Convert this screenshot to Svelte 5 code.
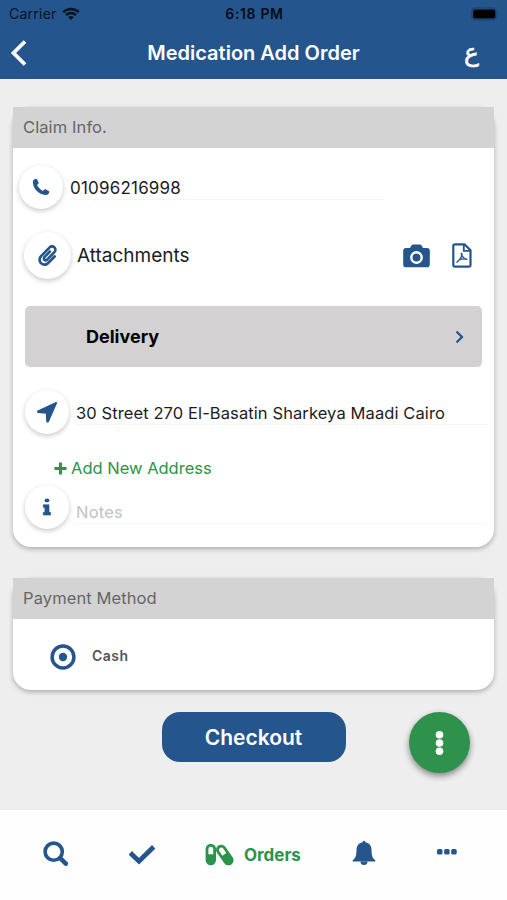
<script>
	let phone = '01096216998';
	let address = '30 Street 270 El-Basatin Sharkeya Maadi Cairo';
	let notes = '';
	let payment = 'cash';
</script>

<div class="screen">
	<header>
		<div class="status">
			<span class="carrier">Carrier</span>
			<svg class="wifi" width="18" height="13" viewBox="0 0 18 13">
				<path d="M1.2 5.1a11.2 11.2 0 0 1 15.6 0M4 8.1a7.2 7.2 0 0 1 10 0" fill="none" stroke="#051425" stroke-width="2.5" />
				<path d="M6.2 10.2a4.1 4.1 0 0 1 5.6 0L9 13z" fill="#051425" />
			</svg>
			<span class="time">6:18 PM</span>
			<svg class="battery" width="28" height="14" viewBox="0 0 28 14">
				<rect x="1" y="1" width="24" height="12" rx="3.5" fill="none" stroke="#1b416d" stroke-width="1.2" />
				<rect x="2.2" y="2.4" width="22" height="9.2" rx="2" fill="#000" />
				<path d="M26.3 5q1.5 2 0 4z" fill="#1b416d" />
			</svg>
		</div>
		<div class="nav">
			<button class="back" aria-label="Back">
				<svg width="17" height="28" viewBox="0 0 17 28">
					<path d="M15 2.500 3.500 14 15 25.500" fill="none" stroke="#fff" stroke-width="3.800" />
				</svg>
			</button>
			<h1>Medication Add Order</h1>
			<button class="lang">ع</button>
		</div>
	</header>

	<main>
		<section class="card claim">
			<h2>Claim Info.</h2>

			<div class="row phone">
				<span class="circle">
					<svg width="18" height="18" viewBox="0 0 18 18">
						<path d="M.9 4.600C.7 2.600 2 1 3.900.7c.4-.1.8.1 1 .5l1.700 3.400c.2.400.1.800-.2 1.100L5 7.100c1.200 2.500 3.200 4.500 5.900 5.800l1.400-1.400c.3-.3.7-.4 1.100-.2l3.400 1.700c.4.200.6.600.5 1-.3 1.900-1.800 3.200-3.800 3C6.800 16.600 1.400 11.200.9 4.600z" fill="#24558c" />
					</svg>
				</span>
				<div class="field">{phone}</div>
			</div>

			<div class="row attach">
				<span class="circle">
					<svg width="19" height="21" viewBox="0 0 448 512">
						<path d="M43.246 466.142c-58.43-60.289-57.341-157.511 1.386-217.581L254.392 34c44.316-45.332 116.351-45.336 160.671 0 43.89 44.894 43.943 117.329 0 162.276L232.214 383.128c-29.855 30.537-78.633 30.111-107.982-.998-28.275-29.97-27.368-77.473 1.452-106.953l143.743-146.835c6.182-6.314 16.312-6.422 22.626-.241l22.861 22.379c6.315 6.182 6.422 16.312.241 22.626L171.427 319.927c-4.932 5.045-5.236 13.428-.648 18.292 4.372 4.634 11.245 4.711 15.688.165l182.849-186.851c19.613-20.062 19.613-52.725-.011-72.798-19.189-19.627-49.957-19.637-69.154 0L90.39 293.295c-34.763 35.56-35.299 93.12-1.191 128.313 34.01 35.093 88.985 35.137 123.058.286l172.06-175.999c6.177-6.319 16.307-6.433 22.626-.256l22.877 22.364c6.319 6.177 6.434 16.307.256 22.626l-172.06 175.998c-59.576 60.938-155.943 60.216-214.77-.485z" fill="#24558c" />
					</svg>
				</span>
				<span class="label">Attachments</span>
				<svg class="camera" width="27" height="24" viewBox="0 0 27 24">
					<path d="M3 4h4l1.4-2.6Q9 .5 10.200 .5h6.600q1.200 0 1.800.9L20 4h4q2.800 0 2.800 2.800v13.600q0 2.800-2.800 2.800H3q-2.800 0-2.800-2.800V6.800Q.2 4 3 4z" fill="#24558c" />
					<circle cx="13.500" cy="13.500" r="5.200" fill="none" stroke="#fff" stroke-width="2.400" />
				</svg>
				<svg class="pdf" width="20" height="25" viewBox="0 0 20 25">
					<path d="M3 1.300h9.500l6 6V22q0 1.700-1.700 1.700H3q-1.700 0-1.700-1.700V3Q1.300 1.300 3 1.300z" fill="none" stroke="#24558c" stroke-width="2.200" />
					<path d="M11.800 1.500v6.300h6.500" fill="none" stroke="#24558c" stroke-width="1.800" />
					<path d="M9.200 9.800q.8 5.600 6 6.700M9.500 9.800q1.300 5-5 9.700M6.500 17.200q4-2 8.800-1" fill="none" stroke="#24558c" stroke-width="1.400" />
				</svg>
			</div>

			<button class="delivery">
				Delivery
				<svg width="9" height="14" viewBox="0 0 9 14">
					<path d="M1.500 1.500 7 7l-5.500 5.500" fill="none" stroke="#24558c" stroke-width="2.200" />
				</svg>
			</button>

			<div class="row address">
				<span class="circle">
					<svg width="22" height="22" viewBox="0 0 22 22">
						<path d="M20.200 1.800 2 10.200v.8l8.700.9.400 8.600h1z" fill="#24558c" stroke="#24558c" stroke-width="1.800" stroke-linejoin="round" />
					</svg>
				</span>
				<div class="field">{address}</div>
			</div>

			<button class="add">
				<svg width="13" height="13" viewBox="0 0 13 13">
					<path d="M6.500 .5v12M.5 6.500h12" stroke="#2a944a" stroke-width="3" />
				</svg>
				Add New Address
			</button>

			<div class="row notes">
				<span class="circle">
					<svg width="10" height="18" viewBox="0 0 10 18">
						<ellipse cx="5" cy="2.400" rx="2.400" ry="1.900" fill="#24558c" />
						<path d="M1.300 6.700h5.700v7.600h1.600V17H1.300v-2.700h1.600V9.400H1.300z" fill="#24558c" stroke="#24558c" stroke-width=".6" stroke-linejoin="round" />
					</svg>
				</span>
				<div class="field">{notes || 'Notes'}</div>
			</div>
		</section>

		<section class="card pay">
			<h2>Payment Method</h2>
			<label>
				<svg width="26" height="26" viewBox="0 0 26 26">
					<circle cx="13" cy="13" r="10.900" fill="none" stroke="#24558c" stroke-width="3.500" />
					{#if payment === 'cash'}
						<circle cx="13" cy="13" r="4.200" fill="#24558c" />
					{/if}
				</svg>
				<span>Cash</span>
			</label>
		</section>

		<button class="checkout">Checkout</button>
		<button class="fab" aria-label="More">
			<svg width="10" height="26" viewBox="0 0 10 26">
				<circle cx="4.500" cy="4.700" r="3.800" fill="#fff" />
				<circle cx="4.500" cy="13" r="3.800" fill="#fff" />
				<circle cx="4.500" cy="21.300" r="3.800" fill="#fff" />
			</svg>
		</button>
	</main>

	<footer>
		<svg class="search" width="26" height="26" viewBox="0 0 26 26">
			<circle cx="10.700" cy="10.700" r="8.600" fill="none" stroke="#24558c" stroke-width="3.600" />
			<path d="m17.200 17.200 5.600 5.400" stroke="#24558c" stroke-width="4.600" stroke-linecap="round" />
		</svg>
		<svg class="check" width="26" height="20" viewBox="0 0 26 20">
			<path d="m3 9.500 7 6.700L23 3.500" fill="none" stroke="#24558c" stroke-width="4.800" stroke-linecap="square" />
		</svg>
		<div class="orders">
			<svg width="29" height="23" viewBox="0 0 29 23">
				<rect x=".6" y=".8" width="10.400" height="21.400" rx="5.200" fill="#2a944a" />
				<path d="M3.400 11.300V6.200a2.400 2.400 0 0 1 4.800 0v5.100z" fill="#fff" />
				<g transform="rotate(-35 19.800 12)">
					<rect x="14.700" y=".5" width="10.200" height="23" rx="5.100" fill="#2a944a" />
					<path d="M17.400 11.300V6a2.400 2.400 0 0 1 4.800 0v5.300z" fill="#fff" />
				</g>
			</svg>
			<span>Orders</span>
		</div>
		<svg class="bell" width="24" height="26" viewBox="0 0 24 26">
			<path d="M10.500 2.200a1.500 1.500 0 0 1 3 0c4 .8 6 4 6 7.700 0 6 1.300 8.300 3.600 10.100.7.700.4 1.500-.5 1.500H1.400c-.9 0-1.200-.8-.5-1.500C3.200 18.200 4.500 15.900 4.500 9.900c0-3.700 2-6.900 6-7.700z" fill="#24558c" />
			<path d="M8.500 21.500h7a3.500 3.500 0 0 1-7 0z" fill="#24558c" />
		</svg>
		<svg class="dots" width="20" height="6" viewBox="0 0 20 6">
			<rect x="0" y="0" width="5.500" height="5.600" rx="1.500" fill="#24558c" />
			<rect x="7.100" y="0" width="5.500" height="5.600" rx="1.500" fill="#24558c" />
			<rect x="14.200" y="0" width="5.500" height="5.600" rx="1.500" fill="#24558c" />
		</svg>
	</footer>
</div>

<style>
	:global(body) {
		margin: 0;
		background: #eee;
	}

	.screen {
		width: 507px;
		height: 900px;
		display: flex;
		flex-direction: column;
		overflow: hidden;
		background: #eee;
		font-family: Inter, "Noto Sans", sans-serif;
		color: #1c1c1c;
		white-space: nowrap;
	}

	svg {
		display: block;
		flex: none;
	}

	button {
		border: 0;
		padding: 0;
		background: none;
		font-family: inherit;
	}

	header {
		height: 79px;
		flex: none;
		background: #24558c;
	}

	.status {
		height: 27px;
		display: grid;
		grid-template-columns: 53px 18px 1fr 28px;
		align-items: center;
		padding: 0 8px 0 9px;
		color: #051425;
		font-size: 14px;
		letter-spacing: 0.25px;
	}

	.time {
		padding-right: 44px;
		text-align: center;
		font-weight: 600;
		letter-spacing: 0.65px;
		color: #030d18;
		transform: translateX(1px);
	}

	.nav {
		height: 51px;
		display: grid;
		grid-template-columns: 17px 1fr 17px;
		align-items: center;
		padding: 0 27px 0 10px;
	}

	h1 {
		margin: 0 0 0 17px;
		text-align: center;
		font-size: 20px;
		font-weight: 600;
		color: #fff;
	}

	.lang {
		color: #fff;
		font: 25px "DejaVu Sans", sans-serif;
		-webkit-text-stroke: 0.5px #fff;
	}

	main {
		flex: 1;
		display: grid;
		grid-template-columns: 1fr auto 1fr;
		grid-template-rows: 440px 112px auto;
		row-gap: 31px;
		padding: 28px 13px 0;
		align-items: start;
	}

	.card {
		grid-column: 1 / 4;
		height: 100%;
		width: 481px;
		background: #fff;
		border-radius: 18px;
		box-shadow: 0 2px 5px rgba(0, 0, 0, 0.28);
	}

	h2 {
		height: 41px;
		line-height: 41px;
		margin: 0;
		padding-left: 10px;
		background: #d3d3d3;
		color: #666;
		font-size: 16.5px;
		font-weight: 400;
		letter-spacing: 0.1px;
	}

	.row {
		display: flex;
		align-items: center;
		height: 44px;
		margin-left: 12px;
	}

	.circle {
		width: 44px;
		height: 44px;
		flex: none;
		display: flex;
		align-items: center;
		justify-content: center;
		border-radius: 50%;
		background: #fff;
		box-shadow: 0 2px 5px rgba(0, 0, 0, 0.22);
	}

	.field {
		box-sizing: border-box;
		height: 25px;
		line-height: 27px;
		border-bottom: 1px solid #f5f5f5;
		margin-left: 7px;
		font-size: 16.5px;
	}

	.phone {
		margin: 17px 0 0 6px;
	}

	.phone .field {
		width: 314px;
		font-size: 17px;
		letter-spacing: 0.2px;
	}

	.attach {
		height: 47px;
		margin: 23px 0 0 11px;
	}

	.attach .circle {
		width: 47px;
		height: 47px;
	}

	.label {
		flex: 1;
		margin-left: 6px;
		font-size: 19px;
		line-height: 24px;
	}

	.pdf {
		margin: 0 22px 0 22px;
	}

	.delivery {
		width: 457px;
		height: 61px;
		margin: 27px 0 0 12px;
		padding: 0 18px 0 61px;
		display: flex;
		align-items: center;
		justify-content: space-between;
		background: #d3d1d2;
		border-radius: 5px;
		font-size: 18px;
		font-weight: 700;
		color: #000;
	}

	.address {
		margin-top: 23px;
	}

	.address .field {
		width: 412px;
		letter-spacing: 0.1px;
	}

	.add {
		display: flex;
		align-items: center;
		gap: 4px;
		height: 24px;
		margin: 22px 0 0 41px;
		color: #2a944a;
		font-size: 16.5px;
	}

	.notes {
		margin-top: 5px;
	}

	.notes .field {
		width: 408px;
		margin-top: 8px;
		color: #c2c2c4;
		letter-spacing: 0.2px;
	}

	label {
		height: 75px;
		display: flex;
		align-items: center;
		gap: 16px;
		padding-left: 37px;
		font-size: 14px;
		font-weight: 600;
		letter-spacing: 0.5px;
		color: #555;
	}

	label span {
		padding-bottom: 2px;
	}

	.checkout {
		grid-column: 2;
		width: 184px;
		height: 50px;
		margin-top: -9px;
		border-radius: 18px;
		background: #24558c;
		color: #fff;
		font-size: 21px;
		font-weight: 600;
	}

	.fab {
		width: 61px;
		height: 61px;
		margin: -9px 24px 0 0;
		justify-self: end;
		display: flex;
		align-items: center;
		justify-content: center;
		border-radius: 50%;
		background: #2f924c;
		box-shadow: 0 3px 6px rgba(0, 0, 0, 0.45);
	}

	footer {
		height: 90px;
		flex: none;
		display: flex;
		align-items: flex-start;
		background: #fefefe;
	}

	.search {
		margin: 31px 0 0 43px;
	}

	.check {
		margin: 35px 0 0 60px;
	}

	.orders {
		display: flex;
		align-items: center;
		gap: 10px;
		width: 96px;
		margin: 33px 0 0 50px;
		color: #2a944a;
		font-size: 17px;
		font-weight: 700;
	}

	.bell {
		margin: 30px 0 0 51px;
	}

	.dots {
		margin: 39px 0 0 61px;
	}
</style>
